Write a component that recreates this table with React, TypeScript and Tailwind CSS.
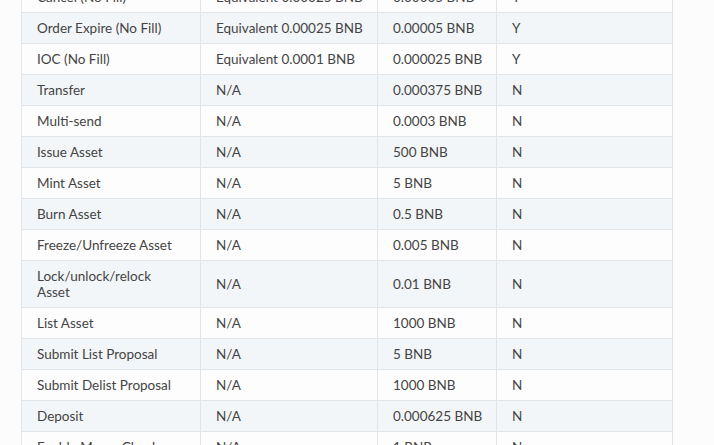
const rows: [string, string, string, string][] = [
  ["Cancel (No Fill)", "Equivalent 0.00025 BNB", "0.00005 BNB", "Y"],
  ["Order Expire (No Fill)", "Equivalent 0.00025 BNB", "0.00005 BNB", "Y"],
  ["IOC (No Fill)", "Equivalent 0.0001 BNB", "0.000025 BNB", "Y"],
  ["Transfer", "N/A", "0.000375 BNB", "N"],
  ["Multi-send", "N/A", "0.0003 BNB", "N"],
  ["Issue Asset", "N/A", "500 BNB", "N"],
  ["Mint Asset", "N/A", "5 BNB", "N"],
  ["Burn Asset", "N/A", "0.5 BNB", "N"],
  ["Freeze/Unfreeze Asset", "N/A", "0.005 BNB", "N"],
  ["Lock/unlock/relock Asset", "N/A", "0.01 BNB", "N"],
  ["List Asset", "N/A", "1000 BNB", "N"],
  ["Submit List Proposal", "N/A", "5 BNB", "N"],
  ["Submit Delist Proposal", "N/A", "1000 BNB", "N"],
  ["Deposit", "N/A", "0.000625 BNB", "N"],
  ["Enable Memo Check", "N/A", "1 BNB", "N"],
];

export default function App() {
  return (
    <div className="h-[445px] overflow-hidden bg-[#fcfcfc] pl-[21px] font-['Lato',sans-serif] text-[13.5px] leading-[16px] text-[#444444]">
      <table className="mt-[-19px] w-[651px] table-fixed border-collapse">
        <colgroup>
          <col className="w-[179px]" />
          <col className="w-[177px]" />
          <col className="w-[119px]" />
          <col className="w-[176px]" />
        </colgroup>
        <tbody>
          {rows.map((r, i) => (
            <tr key={r[0]} className={i % 2 === 1 ? "bg-[#f3f6f8]" : "bg-[#fdfdfd]"}>
              {r.map((c, j) => (
                <td
                  key={j}
                  className={`border border-[#e1e4e8] px-[15px] py-[7px] text-left align-middle ${j > 0 ? "whitespace-nowrap" : ""}`}
                >
                  {c}
                </td>
              ))}
            </tr>
          ))}
        </tbody>
      </table>
    </div>
  );
}
